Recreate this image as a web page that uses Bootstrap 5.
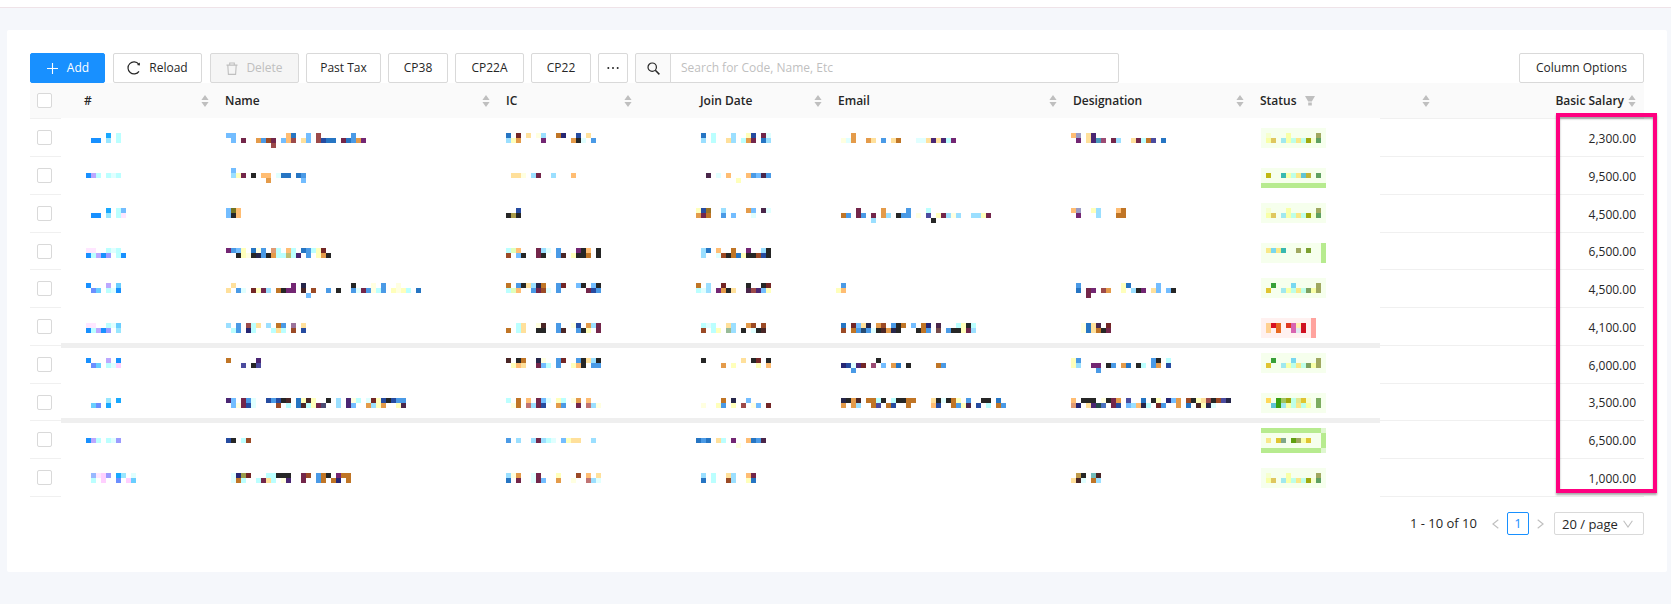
<!DOCTYPE html>
<html lang="en">
<head>
<meta charset="utf-8">
<meta name="viewport" content="width=device-width, initial-scale=1">
<title>Employees</title>
<link href="https://cdn.jsdelivr.net/npm/bootstrap@5.3.0/dist/css/bootstrap.min.css" rel="stylesheet">
<style>
  body { background: #f5f7fb; color: #262626; font-family: "Open Sans", "Noto Sans", sans-serif; font-size: 12px; }
  .topbar { height: 8px; background: #fff; border-bottom: 1px solid #efe3e8; }
  .panel { margin: 22px 4px 32px 7px; padding: 23px 23px 37px 23px; background: #fff; border-radius: 2px; }

  .toolbar { gap: 7px; }
  .tool-set { gap: 8px; }
  .tool { display: inline-flex; align-items: center; justify-content: center; gap: 8px; min-width: 60px; height: 30px; padding: 0 13px;
          border: 1px solid #d9d9d9; border-radius: 2px; background: #fff; color: #262626; font-size: 12px; line-height: 20px; white-space: nowrap; }
  .tool-md { min-width: 69px; }
  .tool-lg { min-width: 75px; }
  .tool-xl { min-width: 89px; }
  .tool-wide { min-width: 125px; }
  .tool-primary { background: #1890ff; border-color: #1890ff; color: #fff; }
  .tool:disabled { background: #f5f5f5; border-color: #d9d9d9; color: #bfbfbf; opacity: 1; }
  .tool-more { min-width: 30px; padding: 0 8px; }
  .finder { flex: 0 1 30%; height: 30px; flex-wrap: nowrap; }
  .finder .input-group-text { width: 36px; padding: 0; justify-content: center; background: #fafafa; border-color: #d9d9d9; border-radius: 2px; color: #262626; }
  .finder .form-control { padding: 0 10px; border-color: #d9d9d9; border-radius: 2px; font-size: 12px; color: #262626; }
  .finder .form-control::placeholder { color: #bfbfbf; }

  .staff { table-layout: fixed; border-collapse: separate; border-spacing: 0; width: 100%; min-width: 1200px; }
  .staff th { height: 36px; padding: 0 8px; background: #fafafa; font-weight: 600; white-space: nowrap; vertical-align: middle; }
  .staff thead th.masked { border-bottom: 1px solid #fff; }
  .staff th.first { padding-left: 23px; }
  .staff tbody tr { height: 38px; }
  .staff tbody tr:nth-child(4n) { height: 37px; }
  .staff td { padding: 0 8px; vertical-align: middle; }
  .staff td.pay { padding-top: 2px; }
  .staff .ruled { border-bottom: 1px solid #f0f0f0; }
  .staff td.masked { padding: 0 0 0 6px; vertical-align: top; }
  .staff td.m-code { padding-left: 25px; }
  .staff td.m-name, .staff td.m-status { padding-left: 9px; }
  .staff td.m-ic { padding-left: 8px; }
  .staff td.m-join { padding-left: 4px; }
  .staff .seam-bottom .masked { box-shadow: inset 0 -3px #efefef; }
  .staff .seam-top .masked { box-shadow: inset 0 2px #efefef; }
  .staff .tick-cell { padding: 0 0 0 7px; }
  .staff svg { display: block; overflow: visible; }
  .form-check-input.tick[type=checkbox] { display: block; width: 15px; height: 15px; margin: 0; border: 1px solid #d9d9d9; border-radius: 2px; }
  .marker { position: absolute; top: 30px; right: -13px; bottom: 4px; width: 101px; border: 4px solid #ff0080;
            box-shadow: 0 2px 2px rgba(0,0,0,.35), inset 0 2px 2px rgba(0,0,0,.35); pointer-events: none; }

  .pager { margin-top: 15px; font-size: 13px; line-height: 23px; }
  .pager .total { margin-right: 15px; }
  .pager .arrow { width: 7px; height: 23px; padding: 0; border: 0; background: none; color: #bfbfbf; display: inline-flex; align-items: center; justify-content: center; }
  .pager .current { width: 22px; height: 23px; margin: 0 8px; border: 1px solid #1890ff; border-radius: 2px; color: #1890ff; text-align: center; text-decoration: none; line-height: 21px; }
  .pager .size { position: relative; margin-left: 10px; }
  .pager select { appearance: none; width: 90px; height: 23px; padding: 0 7px; border: 1px solid #d9d9d9; border-radius: 2px; background: #fff; color: #262626; font-size: 13px; line-height: 20px; display: block; }
  .pager .size svg { position: absolute; right: 11px; top: 8px; pointer-events: none; }
</style>
</head>
<body>
<div class="topbar"></div>

<svg class="d-none" aria-hidden="true">
  <symbol id="sorter" viewBox="0 0 8 12"><path fill="#bfbfbf" d="M4 0 7.600 5H.4zM4 12 .4 7h7.200z"/></symbol>
</svg>

<main class="panel">
  <div class="toolbar d-flex align-items-center">
    <div class="tool-set d-flex">
      <button type="button" class="tool tool-lg tool-primary">
        <svg width="13" height="13" viewBox="0 0 13 13" fill="none" stroke="currentColor" stroke-width="1.1"><path d="M6.500 1v11M1 6.500h11"/></svg>Add</button>
      <button type="button" class="tool tool-xl">
        <svg width="14" height="14" viewBox="0 0 14 14" fill="none" stroke="currentColor" stroke-width="1.2"><path d="M12 10.300A6 6 0 1 1 11.700 3.200"/><path d="M12.900 1.400v3.200l-3-.6z" fill="currentColor" stroke="none"/></svg>Reload</button>
      <button type="button" class="tool tool-xl" disabled>
        <svg width="12" height="13" viewBox="0 0 12 13" fill="none" stroke="currentColor" stroke-width="1.1"><path d="M.5 3.100h11M3.700 3V1h4.600v2M1.800 3.200l.6 9.200h7.200l.6-9.200"/></svg>Delete</button>
    </div>
    <button type="button" class="tool tool-lg">Past Tax</button>
    <button type="button" class="tool">CP38</button>
    <button type="button" class="tool tool-md">CP22A</button>
    <button type="button" class="tool">CP22</button>
    <button type="button" class="tool tool-more" aria-label="More">
      <svg width="12" height="12" viewBox="0 0 12 12" fill="currentColor"><circle cx="1.300" cy="6" r="1"/><circle cx="6" cy="6" r="1"/><circle cx="10.700" cy="6" r="1"/></svg></button>
    <div class="finder input-group">
      <label class="input-group-text" for="q" aria-label="Search">
        <svg width="13" height="13" viewBox="0 0 13 13" fill="none" stroke="currentColor" stroke-width="1.2"><circle cx="5.200" cy="5.200" r="4.200"/><path d="m8.300 8.300 4.100 4.100" stroke-width="1.500"/></svg></label>
      <input id="q" type="text" class="form-control" placeholder="Search for Code, Name, Etc">
    </div>
    <button type="button" class="tool tool-wide ms-auto">Column Options</button>
  </div>

  <div class="position-relative">
    <div class="table-responsive">
      <table class="staff">
        <colgroup>
          <col style="width:31px"><col style="width:156px"><col style="width:281px"><col style="width:142px"><col style="width:52px">
          <col style="width:138px"><col style="width:235px"><col style="width:187px"><col style="width:128px"><col style="width:58px"><col style="width:206px">
        </colgroup>
        <thead>
          <tr id="heads"></tr>
        </thead>
        <tbody id="rows"></tbody>
      </table>
    </div>
    <div class="marker"></div>
  </div>

  <nav class="pager d-flex justify-content-end align-items-center" aria-label="Pages">
    <span class="total">1 - 10 of 10</span>
    <button type="button" class="arrow" aria-label="Previous"><svg width="7" height="10" viewBox="0 0 7 10" fill="none" stroke="currentColor" stroke-width="1.1"><path d="M6.300.7.9 5l5.400 4.300"/></svg></button>
    <a href="#" class="current">1</a>
    <button type="button" class="arrow" aria-label="Next"><svg width="7" height="10" viewBox="0 0 7 10" fill="none" stroke="currentColor" stroke-width="1.1"><path d="M.7.7 6.100 5 .7 9.300"/></svg></button>
    <label class="size">
      <select aria-label="Page size"><option>20 / page</option><option>50 / page</option></select>
      <svg width="10" height="8" viewBox="0 0 10 8" fill="none" stroke="#bfbfbf" stroke-width="1.1"><path d="M.6.8 5 7 9.400.8"/></svg>
    </label>
  </nav>
</main>

<script src="https://cdn.jsdelivr.net/npm/bootstrap@5.3.0/dist/js/bootstrap.bundle.min.js"></script>
<script>
// Personal data is shown as a mosaic of 5px tiles; each letter is a tile colour, "." is empty, "/" starts the next tile row.
const textInk = {
  a:'#1890ff',b:'#18a8ff',c:'#98e6ff',d:'#bbffff',e:'#e0ffff',f:'#73bdff',g:'#4a9ae6',h:'#2675c3',i:'#264ba0',j:'#262673',
  k:'#262626',l:'#4a2673',m:'#732673',n:'#73264a',o:'#9c4a4a',p:'#732626',q:'#4a2626',r:'#9b4a26',s:'#c07526',t:'#e49b4a',
  u:'#ffbd73',v:'#ffe09b',w:'#ffffbb',x:'#ffffe0',y:'#9bdfff',z:'#4a264a',A:'#26264a',B:'#4b4b9e',C:'#9b9bc3',D:'#ffe6ff',
  E:'#bba8ff',F:'#9b9bff',G:'#6b8fff',H:'#69ceff',I:'#ffd0ff',J:'#4b9bbe',K:'#9b4b73',L:'#737320',M:'#e0ffbb',N:'#bdbd73',
  O:'#e09b73',P:'#c07373',Q:'#9b9b4b',R:'#9b7326',S:'#a99b4b',T:'#98bb98',U:'#264b73',V:'#734a4a',W:'#4b73c0',X:'#264b4b',
  Y:'#c09b4b',Z:'#73bdbd','1':'#4b4b73','2':'#9b739b','3':'#98b8ff'
};
const tagInk = {
  '-':'#f6ffed','=':'#fff1f0','+':'#b7eb8f','*':'#dff7d0','_':'#ffa39e',
  a:'#f6ffd0',b:'#f8ffa8',c:'#dfc75f',d:'#a0e8ee',e:'#bdffe8',f:'#f8e888',g:'#a0a80c',h:'#a0a860',i:'#5fa060',j:'#c0b810',
  k:'#38b8b0',l:'#60c4d4',m:'#c0b438',n:'#78d8f0',o:'#7ca030',p:'#38a038',q:'#e0c430',r:'#7ca060',s:'#e0e890',t:'#38a010',
  u:'#a0c460',v:'#ffd858',w:'#80a888',x:'#60a010',y:'#7cac60',
  A:'#ffd090',B:'#d81020',C:'#e86820',D:'#e03820',E:'#d864b0',F:'#fff0b0',G:'#e0e8f0',H:'#d01020'
};
function mosaic(map, ink, y0) {
  let out = '', cols = 0;
  (map || '').split('/').forEach((line, r) => {
    cols = Math.max(cols, line.length);
    [...line].forEach((ch, c) => { if (ch !== '.') out += `<rect x="${c * 5}" y="${y0 + r * 5}" width="5" height="5" fill="${ink[ch]}"/>`; });
  });
  return `<svg width="${cols * 5}" height="30" shape-rendering="crispEdges" aria-hidden="true">${out}</svg>`;
}

const active = '-------------/-a---b-----h-/-bc-dbefegai-/-------------';
const activeAlt = '-------------/--p---n----h-/-q--dbeferbh-/-------------';
// first tile line, code, name, IC, join date, email, designation, status, salary
const staff = [
  [14,'....b.d/.aa.c.d','ff..........uh..f.o......g/.f.n..tgrn.fuo.vf.oihh.nhgtm/.........o','h.p.v.xy..sj..i.v/ywt....m.....tke.g','.h.d...y..wi.ne/.y.d..vy.dtn.hy','...t/.xet..tv.g.vs...eevlvldm','uC.vl/.m.vlJK.ny..vndsB.h',active,'2,300.00'],
  [11,'/aEd.ded','.f/.ywn.k.uu.ehh.hg/........t......f','/.vvx.yn..y...u','/..z.e.u...ugfzg/........w','','','/-------------/-j--kbeflm-i-/-------------/+++++++++++++','9,500.00'],
  [13,'....b.df/.aa.c.dD','fLu/fku','..i/kSk','wiR..y....tf.ze/tns..g.f...e','....n....t....g...d/.sg.ng.n.ty.kgg.x.B.wnyxy..yywn/.......y...........k','uC..wy...us/.m...y...ss',active,'4,500.00'],
  [15,'DD..ded/adEaF.da','mgfw.hxg.Od.ud.hgdwp/..kwxkAgktddNdl.g.wtk','dMu...nye.g...mku.k/r.fk..nk..gq.wkks.k','.yh.u..s..m..yk/.y..erkshwkkrik','','','------------+/-fnfk--h-o--+/------------+/------------+','6,500.00'],
  [13,'a...E.H/.GH.dea','.v...........m.A.........k...x.g..x/v.ge.pwny.skmm.q.r..g.k..gengxdg.wxwd.h/................f','s.gkvyAs..gp..fk.fk/dMu..gnre.g.....nig','s.y..p....k..kp/dey.mtkv..zolfw','.g/wu','.g........wh.....f/.h.nm.ot..w.ykm.vf.fk/...n',activeAlt,'4,500.00'],
  [15,'DD..deH/adEaF.c','y.g.odv.y.sg.2.v/.dg.jd...dvd.r.i','..dv..xq..g..xi.tyn/s.dv..kk..gq..gkw.n','.ded..vy..tr.r/.r.dw.Ty.k.ekq','.h.pfvA.tr.gks.f.sj.z...dwkd/.r.sgUgekqtAk...ksg.V.gkkwny','..xhvz.p/..xhvskn','==========_/=ABC=DEFH=_/=A=C==EGH=_/==========_','4,100.00'],
  [12,'a...E.a/.GH.deI','s.....l/...B.kB','q.ks..Ax..gp..gkvyk/.wuv..nfd.g..wuk.gg','.k.......v.kp.k/.....t.w....w.u','........k/.jielp.K.f.th.k.....sg/...g','wg..............gk.d/wy..mm.kg.th.kd.gt.i/.....g',activeAlt,'6,000.00'],
  [14,'....c.b/.HG.b','lf.nge..igikq.hwqw..k.y.lxd.epwikigg/.fxnie....r.d.hqdwn1..y.lf..tywt..wz','d.s.u.nfe.wd.xt.u/.xs.Pyni..tg..n.Pyx','.....s.A..f/.x..wg.w.o.xf.p','.Aktq.ssdk.dkkss...vkeksw.g..kk.h/.t.ty..sB.si..s....ui..sgwz.i.d.sg','u.kkk.xknt.B..h.kw.jft.rkwvokrBA/Oj.vlXW.ni.fyuAd.pg..t.h.qwAe','-------------/-v-tugesqa-y-/--ltdbefeb-y-/-------------','3,500.00'],
  [12,'/aEd.deF','/ik.dr','/g.y..ynyde.fwvv..y','/hgh.vd.m..uhgz/........x','','','++++++++++++*/------------+/-f-qw-xhbq--+/------------+/++++++++++++*','6,500.00'],
  [14,'.3DIF.bc.e/.d.I..G.IH','.ejQp...ddkkk..nr.gsk.mss/.esd..dnvd.xl..n..gs.sj.s','yxt..en...w...r.u.v/h.n..enf..t..x..Pye','.y.d..vy..un/.h.d..ry..wh','','.Yk.Zq/vqe.sy',active,'1,000.00']
];

const sorter = '<svg width="8" height="12"><use href="#sorter"/></svg>';
const head = (label, cls = '') => `<th scope="col" class="masked ${cls}"><div class="d-flex align-items-center justify-content-between">${label}${sorter}</div></th>`;
document.getElementById('heads').innerHTML =
  '<th class="ruled tick-cell"><input type="checkbox" class="tick form-check-input" aria-label="Select all"></th>' +
  head('<span>#</span>', 'first') + head('<span>Name</span>') + head('<span>IC</span>') + '<th class="masked"></th>' +
  head('<span>Join Date</span>') + head('<span>Email</span>') + head('<span>Designation</span>') +
  '<th scope="col" class="masked"><div class="d-flex align-items-center gap-2">Status<svg width="10" height="10" viewBox="0 0 10 10"><path fill="#bfbfbf" d="M0 0h10L6.800 5.600H3.200zM3.200 6.600h3.600V9.500H3.200z"/></svg></div></th>' +
  `<th class="ruled"><div class="d-flex justify-content-end">${sorter}</div></th>` +
  `<th scope="col" class="ruled"><div class="d-flex align-items-center justify-content-end gap-1">Basic Salary${sorter}</div></th>`;

document.getElementById('rows').innerHTML = staff.map(([y, code, name, ic, join, email, job, tag, pay], i) => {
  const seam = i === 5 || i === 7 ? 'seam-bottom' : i === 6 || i === 8 ? 'seam-top' : '';
  const cell = (map, cls) => `<td class="masked ${cls}">${mosaic(map, textInk, y)}</td>`;
  return `<tr class="${seam}"><td class="ruled tick-cell"><input type="checkbox" class="tick form-check-input" aria-label="Select row ${i + 1}"></td>` +
    cell(code, 'm-code') + cell(name, 'm-name') + cell(ic, 'm-ic') + '<td class="masked"></td>' + cell(join, 'm-join') +
    cell(email, '') + cell(job, '') + `<td class="masked m-status">${mosaic(tag, tagInk, y - 5)}</td>` +
    `<td class="ruled"></td><td class="ruled pay text-end">${pay}</td></tr>`;
}).join('');
</script>
</body>
</html>
